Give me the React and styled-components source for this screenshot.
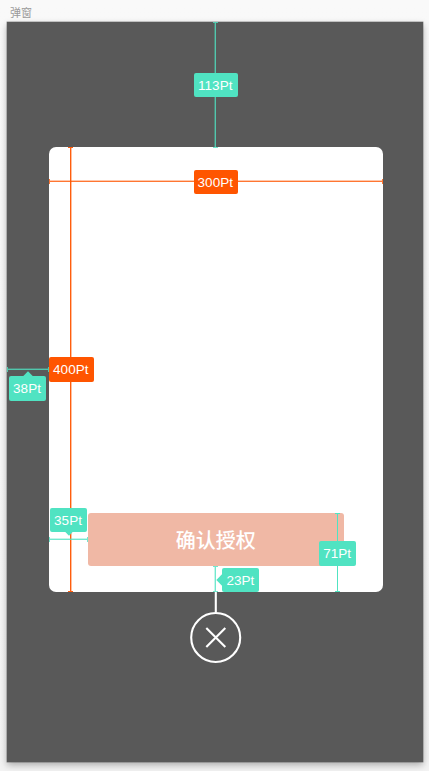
import React from "react";
import styled, { createGlobalStyle, css } from "styled-components";

const GREEN = "#50e3c2";
const ORANGE = "#ff5500";

const GlobalStyle = createGlobalStyle`
  * { box-sizing: border-box; }
  body { margin: 0; background: #f9f9f9; }
`;

const Canvas = styled.main`
  position: relative;
  width: 429px;
  height: 771px;
  overflow: hidden;
  padding-left: 7px;
  background: linear-gradient(#f9f9f9, #f7f7f7 60%, #f3f3f3);
  font-family: "Liberation Sans", "Noto Sans CJK SC", sans-serif;
`;

const ArtboardName = styled.div`
  height: 22px;
  padding: 4px 0 0 3px;
  font-family: "Noto Sans CJK SC", sans-serif;
  font-size: 11px;
  line-height: 16px;
  color: #9a9a9a;
`;

const Artboard = styled.section`
  display: flex;
  flex-direction: column;
  align-items: flex-start;
  width: 416px;
  height: 740px;
  padding: 125.4px 0 0 42px;
  background: #595959;
  box-shadow: 0 0 0 0.5px rgba(0, 0, 0, 0.25), 0 0 1px rgba(0, 0, 0, 0.4), 0 3px 7px rgba(0, 0, 0, 0.3);
`;

const Dialog = styled.div`
  display: flex;
  flex-direction: column;
  justify-content: flex-end;
  flex: none;
  width: 333.5px;
  height: 444.6px;
  padding: 0 39px 25.6px;
  background: #fff;
  border-radius: 7px;
`;

const ConfirmButton = styled.button`
  width: 255.6px;
  height: 53.4px;
  padding: 0;
  border: 0;
  border-radius: 3px;
  background: #f0b8a5;
  color: #fff;
  font: 500 20px/52px "Noto Sans CJK SC", sans-serif;
`;

const CloseIcon = styled.svg`
  display: block;
  flex: none;
  width: 54px;
  height: 72px;
  margin-left: 140px;
  fill: none;
  stroke: #fff;
  stroke-width: 2.1;
`;

const Annotations = styled.div`
  position: absolute;
  inset: 0;
  pointer-events: none;
`;

const strokes = {
  before: "transparent 3px, var(--soft) 3px 4px, currentColor 4px 5px, transparent 5px",
  after: "transparent 4px, currentColor 4px 5px, var(--soft) 5px 6px, transparent 6px",
  crisp: "transparent 4px, currentColor 4px 5px, transparent 5px",
};

const Ruler = styled.div`
  --soft: color-mix(in srgb, currentColor 40%, transparent);
  position: absolute;
  left: ${(p) => p.$x}px;
  top: ${(p) => p.$y}px;
  color: ${(p) => p.$color};
  opacity: ${(p) => p.$opacity || 0.8};
  width: ${(p) => (p.$vertical ? 8 : p.$length)}px;
  height: ${(p) => (p.$vertical ? p.$length : 8)}px;
  background: linear-gradient(
    ${(p) => (p.$vertical ? "to right" : "to bottom")},
    ${(p) => strokes[p.$edge || "before"]}
  );

  &::before,
  &::after {
    content: "";
    position: absolute;
    background: currentColor;
    ${(p) =>
      p.$vertical
        ? css`left: 2px; width: 5px; height: 1px;`
        : css`top: 2px; width: 1px; height: 5px;`}
  }
  &::before { ${(p) => (p.$vertical ? "top: 0;" : "left: 0;")} }
  &::after { ${(p) => (p.$vertical ? "bottom: 0;" : "right: 0;")} }
`;

const arrows = {
  up: css`left: 50%; top: -3.5px; margin-left: -4px;`,
  down: css`left: 50%; bottom: -2px; margin-left: -4px;`,
  left: css`top: 50%; left: -4px; margin-top: -4px;`,
};

const Tag = styled.div`
  position: absolute;
  left: ${(p) => p.$x}px;
  top: ${(p) => p.$y}px;
  width: ${(p) => p.$width || 37}px;
  height: 24.5px;
  border-radius: 2px;
  background: ${(p) => p.$color};
  color: #fff;
  font-size: 13.5px;
  line-height: 26px;
  text-align: center;
  white-space: nowrap;
  ${(p) =>
    p.$arrow &&
    css`
      &::before {
        content: "";
        position: absolute;
        width: 8px;
        height: 8px;
        background: inherit;
        transform: rotate(45deg);
        ${arrows[p.$arrow]}
      }
    `}
`;

const TagText = styled.span`
  position: relative;
  display: block;
  margin-left: -1px;
`;

const rulers = [
  { x: 211, y: 22, length: 126, vertical: true, color: GREEN },
  { x: 49, y: 177, length: 334, color: ORANGE },
  { x: 66, y: 147, length: 445, vertical: true, color: ORANGE, opacity: 0.95, edge: "after" },
  { x: 7, y: 365, length: 42, color: GREEN },
  { x: 49, y: 535, length: 39, color: GREEN },
  { x: 211, y: 566, length: 26, vertical: true, color: GREEN },
  { x: 333, y: 513, length: 79, vertical: true, color: GREEN, opacity: 1, edge: "crisp" },
];

const tags = [
  { text: "113Pt", x: 193.5, y: 72.7, width: 44.5, color: GREEN },
  { text: "300Pt", x: 193.5, y: 169.5, width: 44.5, color: ORANGE },
  { text: "400Pt", x: 49, y: 357.3, width: 44.5, color: ORANGE },
  { text: "38Pt", x: 9, y: 376.4, color: GREEN, arrow: "up" },
  { text: "35Pt", x: 50, y: 507.5, color: GREEN, arrow: "down" },
  { text: "23Pt", x: 222.3, y: 567.7, color: GREEN, arrow: "left" },
  { text: "71Pt", x: 319.2, y: 541, color: GREEN },
];

export default function App() {
  return (
    <>
      <GlobalStyle />
      <Canvas>
        <ArtboardName>弹窗</ArtboardName>
        <Artboard>
          <Dialog>
            <ConfirmButton type="button">确认授权</ConfirmButton>
          </Dialog>
          <CloseIcon viewBox="0 0 54 72" role="img" aria-label="关闭">
            <path d="M26.8 0v20.5" />
            <circle cx="26.7" cy="45.5" r="24.5" />
            <path d="M17.3 36l19 19M36.3 36l-19 19" />
          </CloseIcon>
        </Artboard>
        <Annotations>
          {rulers.map((r, i) => (
            <Ruler
              key={i}
              $x={r.x}
              $y={r.y}
              $length={r.length}
              $vertical={r.vertical}
              $color={r.color}
              $opacity={r.opacity}
              $edge={r.edge}
            />
          ))}
          {tags.map((t) => (
            <Tag key={t.text} $x={t.x} $y={t.y} $width={t.width} $color={t.color} $arrow={t.arrow}>
              <TagText>{t.text}</TagText>
            </Tag>
          ))}
        </Annotations>
      </Canvas>
    </>
  );
}
